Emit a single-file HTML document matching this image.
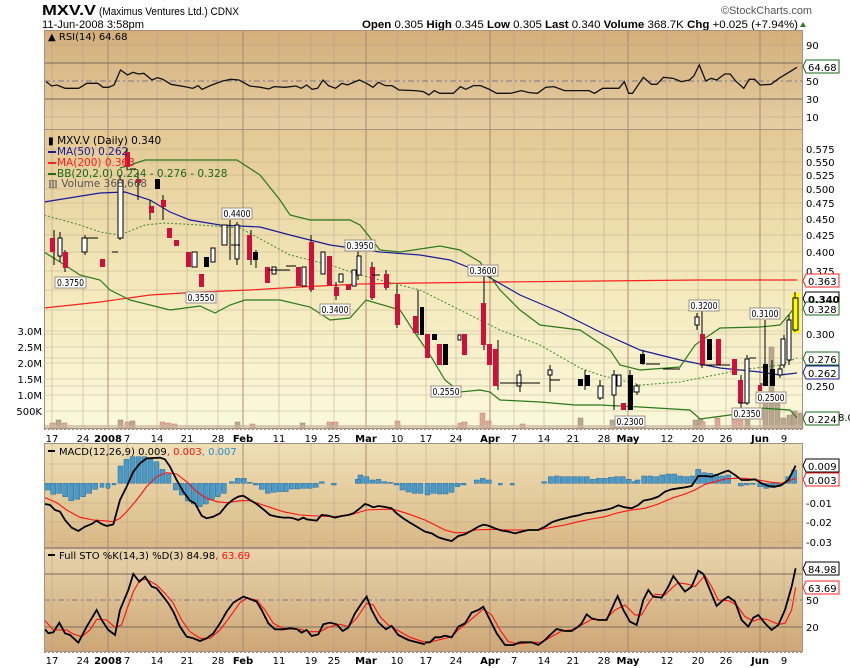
<!DOCTYPE html>
<html><head><meta charset="utf-8"><style>
html,body{margin:0;padding:0;background:#fff;width:850px;height:668px;overflow:hidden}
svg{display:block}
text{font-family:"DejaVu Sans","Liberation Sans",sans-serif;font-size:10px}
.ax{font-family:"Liberation Sans",sans-serif;font-size:11px;fill:#000}
.ns{vector-effect:non-scaling-stroke}
</style></head><body>
<svg width="850" height="668" viewBox="0 0 850 668" xmlns="http://www.w3.org/2000/svg">
<defs>
<linearGradient id="gR" x1="0" y1="0" x2="0" y2="1"><stop offset="0" stop-color="#d3ae7a"/><stop offset="1" stop-color="#e6cea4"/></linearGradient>
<linearGradient id="gM" x1="0" y1="0" x2="0" y2="1"><stop offset="0" stop-color="#e3c894"/><stop offset="0.5" stop-color="#f3e8ba"/><stop offset="1" stop-color="#fbf9dc"/></linearGradient>
<linearGradient id="gC" x1="0" y1="0" x2="0" y2="1"><stop offset="0" stop-color="#efe0b6"/><stop offset="1" stop-color="#d8b886"/></linearGradient>
<linearGradient id="gS" x1="0" y1="0" x2="0" y2="1"><stop offset="0" stop-color="#e8d4ac"/><stop offset="1" stop-color="#cda676"/></linearGradient>
</defs>

<!-- header -->
<text x="42" y="15" style="font-family:'Liberation Sans',sans-serif;font-size:15px;font-weight:bold" textLength="54" lengthAdjust="spacingAndGlyphs">MXV.V</text>
<text x="99" y="15" style="font-family:'Liberation Sans',sans-serif;font-size:11px" textLength="140" lengthAdjust="spacingAndGlyphs">(Maximus Ventures Ltd.) CDNX</text>
<text x="42" y="28" style="font-family:'Liberation Sans',sans-serif;font-size:11px" textLength="102" lengthAdjust="spacingAndGlyphs">11-Jun-2008 3:58pm</text>
<text x="812" y="14" text-anchor="end" style="font-family:'Liberation Sans',sans-serif;font-size:11px;fill:#555" textLength="91" lengthAdjust="spacingAndGlyphs">©StockCharts.com</text>
<text x="362" y="28" style="font-family:'Liberation Sans',sans-serif;font-size:11px" textLength="436" lengthAdjust="spacingAndGlyphs"><tspan font-weight="bold">Open</tspan> 0.305 <tspan font-weight="bold">High</tspan> 0.345 <tspan font-weight="bold">Low</tspan> 0.305 <tspan font-weight="bold">Last</tspan> 0.340 <tspan font-weight="bold">Volume</tspan> 368.7K <tspan font-weight="bold">Chg</tspan> +0.025 (+7.94%)</text>
<path d="M800 27 l3 -5 l3 5z" fill="#2a7a2a"/>

<!-- panel backgrounds -->
<rect x="44" y="30" width="759" height="100" fill="url(#gR)"/>
<rect x="44" y="130" width="759" height="299" fill="url(#gM)"/>
<rect x="44" y="443" width="759" height="105" fill="url(#gC)"/>
<rect x="44" y="548" width="759" height="104" fill="url(#gS)"/>

<!-- vertical grid -->
<g stroke="#b09a80" stroke-opacity="0.45" stroke-width="1">
<path d="M52 30V429M83 30V429M108 30V429M127 30V429M157 30V429M187 30V429M218 30V429M243 30V429M279 30V429M311 30V429M334 30V429M366 30V429M397 30V429M426 30V429M456 30V429M490 30V429M514 30V429M544 30V429M573 30V429M604 30V429M628 30V429M667 30V429M698 30V429M726 30V429M760 30V429M784 30V429"/>
<path d="M52 443V652M83 443V652M108 443V652M127 443V652M157 443V652M187 443V652M218 443V652M243 443V652M279 443V652M311 443V652M334 443V652M366 443V652M397 443V652M426 443V652M456 443V652M490 443V652M514 443V652M544 443V652M573 443V652M604 443V652M628 443V652M667 443V652M698 443V652M726 443V652M760 443V652M784 443V652"/>
</g>
<g stroke="#a08060" stroke-opacity="0.6" stroke-width="1.2">
<path d="M108 30V429M243 30V429M366 30V429M490 30V429M628 30V429M760 30V429M108 443V652M243 443V652M366 443V652M490 443V652M628 443V652M760 443V652"/>
</g>
<g stroke="#b09a80" stroke-opacity="0.35">
<path d="M44 45H803M44 117H803M44 149H803M44 162H803M44 175H803M44 189H803M44 203H803M44 219H803M44 235H803M44 252H803M44 271H803M44 290H803M44 310H803M44 334H803M44 358H803M44 386H803M44 331H803M44 347H803M44 363H803M44 379H803M44 395H803M44 411H803M44 464H803M44 503H803M44 522H803M44 542H803"/>
</g>
<g stroke="#7a6a5a" stroke-width="1"><path d="M44 63H803M44 99H803M44 574H803M44 627H803"/></g>
<g stroke="#7a7a8a" stroke-dasharray="6,3,2,3"><path d="M44 81H803M44 600H803"/></g>

<!-- RSI -->
<text x="48" y="40" style="font-size:10px">▲ RSI(14) 64.68</text>
<g transform="scale(0.5429,0.3333)">
<polyline class="ns" fill="none" stroke="#111" stroke-width="1.3" points="85,245 95,258 105,255 120,265 145,265 160,250 180,250 190,262 200,262 210,255 222,210 235,225 245,217 255,222 265,220 280,240 290,233 300,238 315,253 340,260 355,265 365,257 372,268 390,255 410,243 425,238 440,240 460,258 480,262 495,267 505,260 525,262 545,258 555,265 565,255 575,268 585,265 595,240 605,257 618,265 630,250 640,255 650,248 662,240 675,250 687,262 697,247 710,257 722,257 735,270 765,272 780,275 790,285 800,272 810,280 835,280 848,260 858,268 872,257 885,257 900,267 915,280 940,280 960,272 975,278 990,280 1005,262 1020,260 1040,272 1085,272 1095,280 1110,265 1140,265 1150,245 1158,280 1165,280 1185,232 1200,253 1210,253 1222,232 1240,235 1255,245 1270,240 1278,228 1288,195 1300,243 1310,235 1320,240 1335,222 1345,222 1355,243 1370,265 1380,238 1390,238 1400,255 1420,253 1435,235 1450,220 1468,202"/>
</g>

<!-- main: volume bars -->
<g fill="#b8a890" stroke="#9a8a74" stroke-width="0.5">
<rect x="56" y="420" width="5" height="9"/><rect x="118" y="420" width="5" height="9"/><rect x="130" y="421" width="5" height="8"/><rect x="235" y="422" width="5" height="7"/><rect x="300" y="423" width="5" height="6"/><rect x="330" y="423" width="5" height="6"/><rect x="610" y="420" width="5" height="9"/><rect x="578" y="418" width="5" height="11"/><rect x="693" y="420" width="5" height="9"/><rect x="698" y="419" width="5" height="10"/><rect x="745" y="412" width="5" height="17"/><rect x="763" y="392" width="5" height="37"/><rect x="769" y="347" width="5" height="82"/><rect x="775" y="400" width="5" height="29"/><rect x="781" y="418" width="5" height="11"/><rect x="787" y="415" width="5" height="14"/><rect x="792" y="411" width="5" height="18"/><rect x="798" y="413" width="5" height="16"/>
</g>
<g fill="#dca898" stroke="#c08070" stroke-width="0.5">
<rect x="50" y="423" width="5" height="6"/><rect x="62" y="423" width="5" height="6"/><rect x="125" y="422" width="5" height="7"/><rect x="160" y="422" width="5" height="7"/><rect x="166" y="423" width="5" height="6"/><rect x="172" y="424" width="5" height="5"/><rect x="250" y="424" width="5" height="5"/><rect x="327" y="422" width="5" height="7"/><rect x="333" y="422" width="5" height="7"/><rect x="395" y="421" width="5" height="8"/><rect x="480" y="413" width="5" height="16"/><rect x="486" y="421" width="5" height="8"/><rect x="458" y="423" width="5" height="6"/><rect x="462" y="422" width="5" height="7"/><rect x="520" y="424" width="5" height="5"/><rect x="700" y="422" width="5" height="7"/><rect x="715" y="418" width="5" height="11"/><rect x="732" y="417" width="5" height="12"/><rect x="738" y="420" width="5" height="9"/>
</g>
<g fill="#c8b8a0" fill-opacity="0.7"><path d="M44 425H803V429H44Z"/></g>

<!-- main lines -->
<polyline fill="none" stroke="#ff2020" stroke-width="1.2" points="44,308 100,302 150,295 200,292 250,290 300,287 360,284 420,283 500,282 600,281 700,280 797,280"/>
<polyline fill="none" stroke="#1a1a9a" stroke-width="1.2" points="44,202 100,193 125,192 150,200 170,212 190,220 220,225 260,227 290,235 330,245 380,252 420,255 450,260 480,272 520,295 560,312 600,332 640,350 680,360 720,368 760,372 780,375 797,373"/>
<polyline fill="none" stroke="#2a7a1a" stroke-width="1.2" points="120,168 130,165 145,160 160,160 237,160 260,175 280,200 290,215 310,220 350,220 360,225 380,250 400,252 440,246 460,250 480,262 500,290 520,310 540,325 580,330 610,350 620,365 640,370 680,367 695,345 720,328 760,327 780,325 797,305"/>
<polyline fill="none" stroke="#2a7a1a" stroke-width="1.2" points="44,252 60,262 80,275 100,280 110,290 130,300 170,310 200,306 215,313 230,305 245,300 280,300 310,307 330,320 350,318 366,300 400,310 413,330 430,355 445,380 460,392 480,390 490,392 500,400 540,402 575,405 600,405 640,407 690,410 700,419 730,415 760,408 790,410 797,418"/>
<polyline fill="none" stroke="#3a8a2a" stroke-width="1" stroke-dasharray="2,2" points="44,215 80,225 100,232 120,235 145,225 165,223 200,225 240,228 290,255 330,265 360,275 400,285 420,290 460,310 500,330 540,345 580,368 600,375 640,385 680,382 700,378 740,370 780,365 797,358"/>

<!-- candles -->
<rect x="792" y="293" width="8" height="40" fill="#ffff00"/>
<g stroke="#000" stroke-width="1">
<path d="M54 230V265M60 232V262M65 250V272M85 235V255M120 175V240M127 148V170M138 170V200M150 200V220M163 195V220M230 220V260M237 222V265M251 230V265M256 250V268M311 235V292M336 282V300M358 250V280M372 262V300M386 270V290M397 285V328M418 290V335M484 265V350M498 340V390M520 370V392M550 365V392M585 370V390M600 380V400M614 370V410M630 370V410M637 384V395M643 350V365M697 313V330M702 310V368M741 375V410M747 355V405M765 320V386M772 360V386M780 365V378M784 335V368M789 315V365M795 292V332"/>
</g>
<g fill="#d0103a">
<rect x="50" y="238" width="5" height="14"/><rect x="63" y="252" width="5" height="16"/><rect x="100" y="259" width="5" height="8"/><rect x="125" y="152" width="5" height="15"/><rect x="136" y="179" width="5" height="4"/><rect x="149" y="206" width="5" height="7"/><rect x="161" y="200" width="5" height="7"/><rect x="167" y="228" width="5" height="10"/><rect x="174" y="240" width="5" height="6"/><rect x="186" y="252" width="5" height="15"/><rect x="199" y="274" width="5" height="13"/><rect x="247" y="235" width="5" height="25"/><rect x="265" y="267" width="5" height="16"/><rect x="296" y="267" width="5" height="19"/><rect x="309" y="242" width="5" height="48"/><rect x="327" y="256" width="5" height="30"/><rect x="334" y="287" width="5" height="9"/><rect x="346" y="285" width="5" height="5"/><rect x="370" y="267" width="5" height="31"/><rect x="384" y="274" width="5" height="14"/><rect x="395" y="294" width="5" height="31"/><rect x="413" y="316" width="5" height="17"/><rect x="425" y="334" width="5" height="24"/><rect x="437" y="344" width="5" height="21"/><rect x="462" y="334" width="5" height="21"/><rect x="481" y="303" width="5" height="42"/><rect x="487" y="344" width="5" height="21"/><rect x="493" y="349" width="5" height="37"/><rect x="621" y="403" width="5" height="7"/><rect x="700" y="334" width="5" height="31"/><rect x="716" y="339" width="5" height="26"/><rect x="732" y="359" width="5" height="16"/><rect x="738" y="380" width="5" height="23"/><rect x="758" y="385" width="4" height="6"/>
</g>
<g fill="#000">
<rect x="155" y="179" width="5" height="10"/><rect x="204" y="257" width="5" height="10"/><rect x="253" y="252" width="5" height="8"/><rect x="420" y="307" width="4" height="28"/><rect x="432" y="334" width="5" height="6"/><rect x="443" y="344" width="5" height="21"/><rect x="578" y="379" width="5" height="7"/><rect x="585" y="375" width="5" height="11"/><rect x="628" y="375" width="5" height="35"/><rect x="640" y="354" width="5" height="10"/><rect x="707" y="339" width="5" height="21"/><rect x="763" y="364" width="5" height="22"/><rect x="770" y="369" width="5" height="17"/>
</g>
<g fill="#fff" stroke="#000" stroke-width="1">
<rect x="58" y="238" width="4" height="18"/><rect x="82" y="238" width="5" height="14"/><rect x="118" y="180" width="5" height="58"/><rect x="192" y="252" width="5" height="15"/><rect x="211" y="248" width="4" height="14"/><rect x="222" y="225" width="5" height="20"/><rect x="235" y="225" width="4" height="34"/><rect x="272" y="267" width="4" height="7"/><rect x="302" y="267" width="4" height="19"/><rect x="321" y="252" width="4" height="22"/><rect x="339" y="274" width="4" height="8"/><rect x="352" y="270" width="4" height="16"/><rect x="357" y="256" width="4" height="19"/><rect x="458" y="335" width="3" height="5"/><rect x="517" y="375" width="4" height="11"/><rect x="548" y="370" width="4" height="5"/><rect x="598" y="386" width="5" height="12"/><rect x="612" y="375" width="4" height="20"/><rect x="617" y="375" width="4" height="11"/><rect x="634" y="386" width="5" height="6"/><rect x="695" y="317" width="4" height="8"/><rect x="745" y="359" width="4" height="44"/><rect x="778" y="369" width="4" height="6"/><rect x="781" y="339" width="4" height="26"/><rect x="787" y="320" width="4" height="40"/><rect x="793" y="298" width="5" height="32" fill="#ffff00"/>
</g>
<g stroke="#000"><path d="M84 238H98M112 252H118M130 169H136M231 245H240M268 270H290M286 266H296M372 275H380M500 383H540M550 380H560M646 364H660M663 369H680M700 365H730M749 358H756M760 384H765M738 403H745"/></g>

<!-- price tags -->
<g fill="#fff" stroke="#a09080" stroke-width="1">
<rect x="55" y="277" width="31" height="11"/><rect x="186" y="292" width="30" height="11"/><rect x="222" y="208" width="30" height="11"/><rect x="320" y="304" width="30" height="11"/><rect x="345" y="240" width="30" height="11"/><rect x="468" y="265" width="30" height="11"/><rect x="431" y="386" width="30" height="11"/><rect x="615" y="416" width="30" height="11"/><rect x="689" y="300" width="30" height="11"/><rect x="750" y="308" width="30" height="11"/><rect x="756" y="392" width="30" height="11"/><rect x="732" y="408" width="30" height="11"/>
</g>
<g style="font-size:9px;font-family:'DejaVu Sans',sans-serif">
<text x="57" y="286" textLength="27" lengthAdjust="spacingAndGlyphs">0.3750</text><text x="187.5" y="301" textLength="27" lengthAdjust="spacingAndGlyphs">0.3550</text><text x="223.5" y="217" textLength="27" lengthAdjust="spacingAndGlyphs">0.4400</text><text x="321.5" y="313" textLength="27" lengthAdjust="spacingAndGlyphs">0.3400</text><text x="346.5" y="249" textLength="27" lengthAdjust="spacingAndGlyphs">0.3950</text><text x="469.5" y="274" textLength="27" lengthAdjust="spacingAndGlyphs">0.3600</text><text x="432.5" y="395" textLength="27" lengthAdjust="spacingAndGlyphs">0.2550</text><text x="616.5" y="425" textLength="27" lengthAdjust="spacingAndGlyphs">0.2300</text><text x="690.5" y="309" textLength="27" lengthAdjust="spacingAndGlyphs">0.3200</text><text x="751.5" y="317" textLength="27" lengthAdjust="spacingAndGlyphs">0.3100</text><text x="757.5" y="401" textLength="27" lengthAdjust="spacingAndGlyphs">0.2500</text><text x="733.5" y="417" textLength="27" lengthAdjust="spacingAndGlyphs">0.2350</text>
</g>

<!-- legend -->
<g style="font-size:10.5px">
<text x="48" y="144" style="font-size:10.5px">▮ MXV.V (Daily) 0.340</text>
<path d="M48 152h8" stroke="#1a1a9a" stroke-width="2"/><text x="57" y="155" fill="#1a1a9a" style="font-size:10.5px">MA(50) 0.262</text>
<path d="M48 163h8" stroke="#ff2020" stroke-width="2"/><text x="57" y="166" fill="#ff2020" style="font-size:10.5px">MA(200) 0.363</text>
<path d="M48 174h8" stroke="#1a6a1a" stroke-width="2"/><text x="57" y="177" fill="#1a6a1a" style="font-size:10.5px">BB(20,2.0) 0.224 - 0.276 - 0.328</text>
<text x="48" y="187" fill="#555" style="font-size:10.5px">▥ Volume 368,668</text>
</g>

<!-- MACD -->
<g transform="translate(0,430) scale(0.3333)">
<path class="ns" fill="#4a9ac8" stroke="#2a6a9a" stroke-width="0.5" d="M135 160V180h15V160ZM152 160V193h15V160ZM170 160V190h15V160ZM188 160V200h15V160ZM206 160V212h15V160ZM224 160V208h15V160ZM242 160V200h15V160ZM260 160V190h15V160ZM278 160V178h15V160ZM300 160V172h12V160ZM318 160V175h12V160ZM336 160V165h12V160ZM354 160V108h15V160ZM372 160V88h15V160ZM390 160V80h15V160ZM408 160V80h15V160ZM426 160V80h15V160ZM444 160V88h15V160ZM462 160V95h15V160ZM480 160V118h15V160ZM498 160V132h15V160ZM520 160V180h15V160ZM538 160V195h15V160ZM556 160V213h15V160ZM574 160V222h15V160ZM592 160V230h15V160ZM610 160V222h15V160ZM628 160V210h15V160ZM646 160V200h15V160ZM664 160V190h15V160ZM688 160V155h15V160ZM706 160V145h15V160ZM724 160V145h15V160ZM742 160V157h15V160ZM760 160V165h15V160ZM778 160V178h15V160ZM796 160V190h15V160ZM814 160V187h15V160ZM832 160V185h15V160ZM850 160V185h15V160ZM868 160V177h15V160ZM886 160V177h15V160ZM904 160V175h15V160ZM922 160V175h15V160ZM940 160V172h15V160ZM958 160V155h15V160ZM994 160V165h15V160ZM1066 160V148h15V160ZM1074 160V135h15V160ZM1092 160V140h15V160ZM1110 160V150h15V160ZM1128 160V148h15V160ZM1146 160V155h15V160ZM1164 160V157h15V160ZM1182 160V165h15V160ZM1200 160V180h15V160ZM1218 160V186h15V160ZM1236 160V190h15V160ZM1254 160V190h15V160Z"/>
<polyline class="ns" fill="none" stroke="#ff1010" stroke-width="1.1" points="135,203 170,218 200,240 240,262 280,270 310,272 340,275 360,265 380,245 410,210 440,170 470,140 500,128 530,132 560,155 590,185 620,205 650,215 680,218 720,212 750,212 780,222 810,232 850,245 900,255 950,258 1000,260 1050,255 1100,240 1150,238 1180,238 1220,250 1275,270"/>
<polyline class="ns" fill="none" stroke="#000" stroke-width="1.8" points="135,222 150,225 165,240 180,245 195,270 215,293 235,303 255,290 275,282 290,272 305,282 320,288 340,283 360,210 380,170 400,125 420,100 440,85 460,84 480,83 495,88 510,110 530,150 550,185 570,212 585,220 605,257 620,265 640,260 660,250 680,225 700,208 715,200 730,197 750,210 770,222 790,238 810,255 830,260 850,263 870,263 880,265 895,270 910,263 920,268 935,270 950,272 965,255 985,257 1005,263 1025,258 1045,255 1060,250 1080,235 1095,222 1105,225 1120,232 1135,228 1150,230 1165,233 1175,235 1190,250 1210,265 1230,278 1250,290 1275,305"/>
</g>
<g transform="translate(425,430) scale(0.3333)">
<path class="ns" fill="#4a9ac8" stroke="#2a6a9a" stroke-width="0.5" d="M0 160V195h15V160ZM18 160V190h15V160ZM36 160V192h15V160ZM54 160V192h15V160ZM72 160V187h15V160ZM90 160V170h15V160ZM108 160V165h15V160ZM148 160V150h15V160ZM166 160V145h15V160ZM184 160V150h15V160ZM220 160V165h12V160ZM256 160V165h12V160ZM350 160V155h15V160ZM370 160V140h15V160ZM388 160V138h15V160ZM406 160V140h15V160ZM424 160V140h15V160ZM442 160V140h15V160ZM460 160V140h15V160ZM478 160V140h15V160ZM496 160V148h15V160ZM514 160V145h15V160ZM532 160V145h15V160ZM550 160V142h15V160ZM568 160V140h15V160ZM586 160V140h15V160ZM604 160V148h15V160ZM622 160V155h15V160ZM630 160V150h15V160ZM650 160V138h15V160ZM668 160V138h15V160ZM686 160V140h15V160ZM704 160V135h15V160ZM722 160V132h15V160ZM740 160V132h15V160ZM758 160V138h15V160ZM776 160V140h15V160ZM794 160V138h15V160ZM812 160V118h15V160ZM830 160V128h15V160ZM848 160V130h15V160ZM866 160V133h15V160ZM884 160V138h15V160ZM902 160V135h15V160ZM940 160V168h15V160ZM958 160V165h15V160ZM976 160V163h15V160ZM998 160V170h15V160ZM1016 160V175h15V160ZM1034 160V173h15V160ZM1052 160V170h15V160ZM1082 160V140h15V160ZM1100 160V120h15V160Z"/>
<polyline class="ns" fill="none" stroke="#ff1010" stroke-width="1.1" points="0,270 30,285 60,300 90,308 120,308 150,300 200,298 250,300 300,300 340,300 380,292 420,285 460,275 500,267 540,260 580,248 620,240 660,235 700,222 740,205 780,192 810,180 840,163 870,155 900,147 930,145 960,145 1000,150 1040,157 1070,160 1090,153 1112,145"/>
<polyline class="ns" fill="none" stroke="#000" stroke-width="1.8" points="0,305 20,310 40,322 60,328 80,333 100,318 120,313 140,302 160,290 175,284 190,287 210,295 230,302 250,305 270,310 290,305 310,300 340,300 360,290 380,277 400,270 420,265 440,260 460,256 480,250 500,248 520,243 540,240 560,235 580,226 600,232 620,235 640,225 655,212 680,207 700,200 720,185 740,178 760,175 780,172 800,168 820,138 840,138 860,140 880,133 900,125 910,122 930,135 950,150 970,150 990,148 1010,160 1030,168 1050,170 1070,165 1090,150 1112,107"/>
</g>
<path d="M48 451h7" stroke="#000" stroke-width="2"/>
<text x="59" y="455">MACD(12,26,9) 0.009<tspan fill="#ff1010">, 0.003</tspan><tspan fill="#2a8ad0">, 0.007</tspan></text>

<!-- STO -->
<g transform="translate(0,430) scale(0.3333)">
<polyline class="ns" fill="none" stroke="#ff1010" stroke-width="1.1" points="135,572 160,600 200,600 220,612 245,620 270,600 290,568 320,570 345,592 365,585 380,540 400,485 420,450 440,448 470,465 495,490 520,520 545,570 570,605 600,625 630,625 660,600 690,560 720,518 740,505 770,510 795,540 820,580 850,595 900,598 930,605 960,605 990,590 1020,583 1045,590 1070,565 1100,520 1120,525 1140,560 1165,585 1200,605 1230,622 1275,637"/>
<polyline class="ns" fill="none" stroke="#000" stroke-width="1.8" points="135,598 145,610 160,607 178,578 195,610 210,615 235,638 260,590 290,540 305,570 325,600 345,615 360,540 385,480 400,432 418,455 435,440 455,470 470,475 490,500 505,520 520,545 540,590 560,620 580,625 600,633 620,625 640,610 660,580 680,545 700,518 730,500 750,507 770,515 785,540 805,580 825,598 850,598 870,595 890,597 905,608 920,600 935,618 955,613 970,583 990,578 1010,583 1028,603 1045,593 1065,550 1085,520 1100,500 1115,540 1135,577 1158,598 1175,588 1195,615 1225,630 1255,638 1275,643"/>
</g>
<g transform="translate(425,430) scale(0.3333)">
<polyline class="ns" fill="none" stroke="#ff1010" stroke-width="1.1" points="0,640 40,630 80,620 100,600 130,575 160,550 175,537 200,555 225,600 250,635 280,642 320,637 350,637 380,620 410,603 440,600 470,585 500,568 540,570 570,540 600,525 630,555 650,555 670,520 690,493 720,495 740,475 760,458 790,463 810,470 840,437 860,470 880,510 910,512 935,525 960,560 985,573 1010,565 1030,570 1060,583 1080,580 1100,540 1112,472"/>
<polyline class="ns" fill="none" stroke="#000" stroke-width="1.8" points="0,637 15,637 30,622 45,622 60,617 80,622 100,590 120,580 140,548 160,540 175,530 195,570 215,610 240,645 265,645 285,637 320,637 340,645 360,630 375,615 395,597 420,603 440,603 460,590 470,580 485,553 500,565 520,570 545,570 560,537 578,498 595,540 615,575 635,585 655,510 670,480 685,500 710,503 730,470 745,438 765,465 780,485 800,470 820,422 835,432 855,480 875,528 895,510 910,500 930,515 950,570 970,590 985,563 1000,555 1020,580 1040,600 1060,585 1080,540 1100,470 1112,415"/>
</g>
<path d="M48 555h7" stroke="#000" stroke-width="2"/>
<text x="59" y="559">Full STO %K(14,3) %D(3) 84.98<tspan fill="#ff1010">, 63.69</tspan></text>

<!-- panel borders -->
<g fill="none" stroke="#a89080" stroke-width="1">
<rect x="44.5" y="30.5" width="758" height="99"/>
<rect x="44.5" y="129.5" width="758" height="299"/>
<rect x="44.5" y="443.5" width="758" height="104"/>
<rect x="44.5" y="548.5" width="758" height="103"/>
</g>
<g stroke="#a89080" stroke-dasharray="2,2"><path d="M44 429.5H803M44 652.5H803"/></g>

<!-- right axes -->
<g class="ax" style="font-size:11px">
<text x="806" y="49">90</text><text x="806" y="85">50</text><text x="806" y="103">30</text><text x="806" y="121">10</text>
<text x="806" y="153">0.575</text><text x="806" y="166">0.550</text><text x="806" y="179">0.525</text><text x="806" y="193">0.500</text><text x="806" y="207">0.475</text><text x="806" y="223">0.450</text><text x="806" y="239">0.425</text><text x="806" y="256">0.400</text><text x="806" y="275">0.375</text><text x="806" y="338">0.300</text><text x="806" y="390">0.250</text>
<text x="806" y="507">-0.01</text><text x="806" y="526">-0.02</text><text x="806" y="546">-0.03</text>
<text x="806" y="604">50</text><text x="806" y="631">20</text>
</g>
<g stroke-width="1" fill="#fff">
<path d="M806 60h33v13h-33l-3 -6.5z" stroke="#1a6a1a"/>
<path d="M806 274h33v13h-33l-3 -6.5z" stroke="#ff2020"/>
<path d="M806 292h33v13h-33l-3 -6.5z" stroke="#000"/>
<path d="M806 302h33v13h-33l-3 -6.5z" stroke="#1a6a1a"/>
<path d="M806 352h33v13h-33l-3 -6.5z" stroke="#1a6a1a"/>
<path d="M806 366h33v13h-33l-3 -6.5z" stroke="#1a1a9a"/>
<path d="M806 412h33v13h-33l-3 -6.5z" stroke="#1a6a1a"/>
<path d="M806 459h33v13h-33l-3 -6.5z" stroke="#000"/>
<path d="M806 473h33v13h-33l-3 -6.5z" stroke="#ff2020"/>
<path d="M806 562h33v13h-33l-3 -6.5z" stroke="#000"/>
<path d="M806 581h33v13h-33l-3 -6.5z" stroke="#ff2020"/>
</g>
<g class="ax">
<text x="808" y="71">64.68</text><text x="808" y="285">0.363</text><text x="808" y="303" font-weight="bold">0.340</text><text x="808" y="313">0.328</text><text x="808" y="363">0.276</text><text x="808" y="377">0.262</text><text x="808" y="423">0.224</text><text x="838" y="421">8.0</text>
<text x="808" y="470">0.009</text><text x="808" y="484">0.003</text><text x="808" y="573">84.98</text><text x="808" y="592">63.69</text>
</g>

<!-- volume axis -->
<g class="ax" text-anchor="end" style="font-size:11px">
<text x="42" y="335">3.0M</text><text x="42" y="351">2.5M</text><text x="42" y="367">2.0M</text><text x="42" y="383">1.5M</text><text x="42" y="399">1.0M</text><text x="42" y="415">500K</text>
</g>

<!-- date axes -->
<g class="ax" text-anchor="middle" style="font-size:11px">
<text x="52" y="442">17</text><text x="83" y="442">24</text><text x="108" y="442" font-weight="bold">2008</text><text x="127" y="442">7</text><text x="157" y="442">14</text><text x="187" y="442">21</text><text x="218" y="442">28</text><text x="243" y="442" font-weight="bold">Feb</text><text x="279" y="442">11</text><text x="311" y="442">19</text><text x="334" y="442">25</text><text x="366" y="442" font-weight="bold">Mar</text><text x="397" y="442">10</text><text x="426" y="442">17</text><text x="456" y="442">24</text><text x="490" y="442" font-weight="bold">Apr</text><text x="514" y="442">7</text><text x="544" y="442">14</text><text x="573" y="442">21</text><text x="604" y="442">28</text><text x="628" y="442" font-weight="bold">May</text><text x="667" y="442">12</text><text x="698" y="442">20</text><text x="726" y="442">26</text><text x="760" y="442" font-weight="bold">Jun</text><text x="784" y="442">9</text>
<text x="52" y="664">17</text><text x="83" y="664">24</text><text x="108" y="664" font-weight="bold">2008</text><text x="127" y="664">7</text><text x="157" y="664">14</text><text x="187" y="664">21</text><text x="218" y="664">28</text><text x="243" y="664" font-weight="bold">Feb</text><text x="279" y="664">11</text><text x="311" y="664">19</text><text x="334" y="664">25</text><text x="366" y="664" font-weight="bold">Mar</text><text x="397" y="664">10</text><text x="426" y="664">17</text><text x="456" y="664">24</text><text x="490" y="664" font-weight="bold">Apr</text><text x="514" y="664">7</text><text x="544" y="664">14</text><text x="573" y="664">21</text><text x="604" y="664">28</text><text x="628" y="664" font-weight="bold">May</text><text x="667" y="664">12</text><text x="698" y="664">20</text><text x="726" y="664">26</text><text x="760" y="664" font-weight="bold">Jun</text><text x="784" y="664">9</text>
</g>
</svg>
</body></html>
